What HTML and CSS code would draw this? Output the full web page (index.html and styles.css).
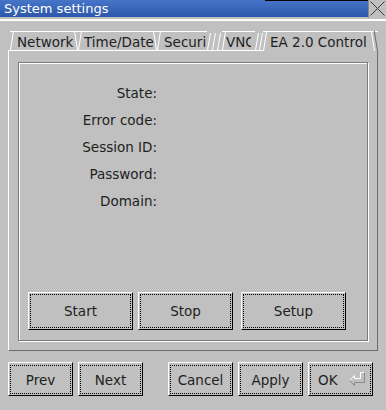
FILE: index.html
```html
<!DOCTYPE html>
<html lang="en">
<head>
    <meta charset="utf-8"/>
    <title>System settings</title>
    <link rel="stylesheet" href="styles.css">
</head>
<body>
    <div class="window">
        <div class="titlebar">
            <div class="title">System settings</div>
            <div class="close">
                <svg width="17" height="17" viewBox="0 0 17 17">
                    <path d="M1.5 1.5 L15.5 15.5 M15.5 1.5 L1.5 15.5" stroke="#3a3a3a" stroke-width="1" fill="none"/>
                </svg>
            </div>
        </div>
        <div class="dialog">
            <div class="tabs">
                <div class="tab tab-network"><span class="tab-label">Network</span></div>
                <div class="tab tab-time"><span class="tab-label">Time/Date</span></div>
                <div class="tab tab-security"><span class="tab-label">Security</span></div>
                <div class="tab-scroll tab-scroll-3">
                    <svg width="15" height="19" viewBox="0 0 15 19">
                        <path d="M0.5 19 L3.5 2 M5.5 19 L8.5 2 M10.5 19 L13.5 2" stroke="#fff" stroke-width="1" fill="none"/>
                    </svg>
                </div>
                <div class="tab tab-vnc"><span class="tab-label">VNC</span></div>
                <div class="tab-scroll tab-scroll-2">
                    <svg width="8" height="19" viewBox="0 0 8 19">
                        <path d="M0.5 19 L3.5 2 M4.5 19 L7.5 2" stroke="#fff" stroke-width="1" fill="none"/>
                    </svg>
                </div>
                <div class="tab tab-ea active"><span class="tab-label">E<span class="mnemonic">A</span> 2.0 Con<span class="mnemonic">t</span>rol</span></div>
            </div>
            <div class="pane">
                <div class="group">
                    <div class="fields">
                        <div class="field-label">State:</div>
                        <div class="field-value"></div>
                        <div class="field-label">Error code:</div>
                        <div class="field-value"></div>
                        <div class="field-label">Session ID:</div>
                        <div class="field-value"></div>
                        <div class="field-label">Password:</div>
                        <div class="field-value"></div>
                        <div class="field-label">Domain:</div>
                        <div class="field-value"></div>
                    </div>
                    <div class="actions">
                        <button class="btn btn-wide"><span class="btn-focus">Start</span></button>
                        <button class="btn btn-stop"><span class="btn-focus">Stop</span></button>
                        <button class="btn btn-wide btn-setup"><span class="btn-focus">Setup</span></button>
                    </div>
                </div>
            </div>
            <div class="footer">
                <button class="btn btn-small"><span class="btn-focus">Prev</span></button>
                <button class="btn btn-small"><span class="btn-focus">Next</span></button>
                <button class="btn btn-small btn-cancel"><span class="btn-focus">Cancel</span></button>
                <button class="btn btn-small"><span class="btn-focus">Apply</span></button>
                <button class="btn btn-small btn-ok">
                    <span class="btn-focus ok-focus">
                        OK
                        <svg class="enter-icon" width="17" height="15" viewBox="0 0 17 15">
                            <polyline points="0.5,8.5 5.5,3.5 5.5,6.5 11.5,6.5 11.5,0.5 15.5,0.5" stroke="#fff" stroke-width="1" fill="none"/>
                            <polyline points="15.5,0.5 15.5,10.5 5.5,10.5 5.5,13.5 0.5,8.5" stroke="#8a8a8a" stroke-width="1" fill="none"/>
                        </svg>
                    </span>
                </button>
            </div>
        </div>
    </div>
</body>
</html>
```

FILE: styles.css
```css
* {
    box-sizing: border-box;
}
body, html {
    margin: 0;
    padding: 0;
    background: #c0c0c0;
    font-family: "DejaVu Sans", sans-serif;
    color: #1e1e1e;
}
.window {
    width: 386px;
    height: 410px;
    overflow: hidden;
}

/* barre de titre */
.titlebar {
    position: relative;
    display: flex;
    height: 17px;
}
.titlebar::before {
    content: '';
    position: absolute;
    top: 0;
    left: 265px;
    width: 103px;
    height: 1px;
    background: #000;
}
.title {
    flex: 1;
    height: 17px;
    padding-left: 4px;
    background: linear-gradient(#4675c8, #2d57aa);
    color: #fff;
    font-size: 13px;
    line-height: 17px;
}
.close {
    width: 18px;
    height: 18px;
    border-left: 1px solid #8a8a8a;
    background: #c0c0c0;
}
.close svg {
    display: block;
}

.dialog {
    margin-top: 2px;
    border-top: 2px solid #fff;
    padding: 10px 0 0 8px;
}

/* onglets */
.tabs {
    display: flex;
    align-items: flex-start;
    height: 19px;
    margin-left: 2px;
    font-size: 13.5px;
}
.tab {
    position: relative;
    height: 19px;
    border-top: 1px solid #fff;
    padding: 2px 0 0 7px;
    line-height: 17px;
    white-space: nowrap;
}
.tab::before,
.tab::after {
    content: '';
    position: absolute;
    top: -1px;
    bottom: 0;
    width: 1px;
    background: #fff;
    transform-origin: bottom;
}
.tab::before {
    left: 0;
    transform: skewX(-9deg);
}
.tab::after {
    right: 0;
    transform: skewX(9deg);
}
.tab-label {
    display: block;
    overflow: hidden;
}
.tab-network {
    width: 68px;
}
.tab-time {
    width: 79px;
    padding-left: 6px;
}
.tab-security {
    width: 50px;
}
.tab-security .tab-label {
    width: 42px;
}
.tab-vnc {
    width: 33px;
    padding-left: 4px;
}
.tab-vnc::after,
.tab-security::after {
    display: none;
}
.tab-vnc .tab-label {
    width: 25px;
}
.tab-scroll svg {
    display: block;
}
.tab-scroll-3 {
    width: 15px;
}
.tab-scroll-2 {
    width: 8px;
}
.tab-ea {
    width: 115px;
}
.tab.active {
    z-index: 1;
    height: 20px;
    background: #c0c0c0;
}
.tab.active::after {
    box-shadow: 3px 0 0 #6c6c6c;
    right: 3px;
}
.mnemonic {
    position: relative;
}
.mnemonic::after {
    content: '';
    position: absolute;
    left: 35%;
    bottom: -2px;
    width: 3px;
    height: 1px;
    background: #1e1e1e;
}

/* panneau */
.pane {
    display: flex;
    width: 370px;
    height: 301px;
    padding: 11px 9px 9px;
    border-top: 1px solid #fff;
    border-left: 1px solid #fff;
    border-right: 1px solid #6c6c6c;
    border-bottom: 1px solid #6c6c6c;
}
.group {
    flex: 1;
    display: flex;
    flex-direction: column;
    border: 1px solid #7a7a7a;
    box-shadow: inset 1px 1px 0 #fff, 1px 1px 0 #fff;
    padding: 17px 0 10px 9px;
}
.fields {
    display: grid;
    grid-template-columns: 129px 1fr;
    grid-auto-rows: 27px;
    font-size: 13.5px;
    line-height: 27px;
}
.field-label {
    text-align: right;
}
.actions {
    display: flex;
    margin-top: auto;
}

/* boutons */
.btn {
    display: flex;
    padding: 1px;
    margin: 0;
    border: 1px solid;
    border-color: #fff #000 #000 #fff;
    background: #c0c0c0;
    font-family: "DejaVu Sans", sans-serif;
    font-size: 13.5px;
    color: #1e1e1e;
}
.btn-focus {
    flex: 1;
    display: flex;
    align-items: center;
    justify-content: center;
    border: 1px dotted #000;
}
.btn-wide {
    width: 105px;
    height: 38px;
}
.btn-stop {
    width: 95px;
    height: 38px;
    margin-left: 5px;
}
.btn-setup {
    margin-left: 8px;
}
.footer {
    display: flex;
    gap: 5px;
    margin-top: 11px;
}
.btn-small {
    width: 65px;
    height: 34px;
    padding-top: 2px;
}
.btn-cancel {
    margin-left: 20px;
}
.ok-focus {
    justify-content: flex-start;
    padding-left: 7px;
    gap: 12px;
}
.enter-icon {
    margin-top: -1px;
}
```
